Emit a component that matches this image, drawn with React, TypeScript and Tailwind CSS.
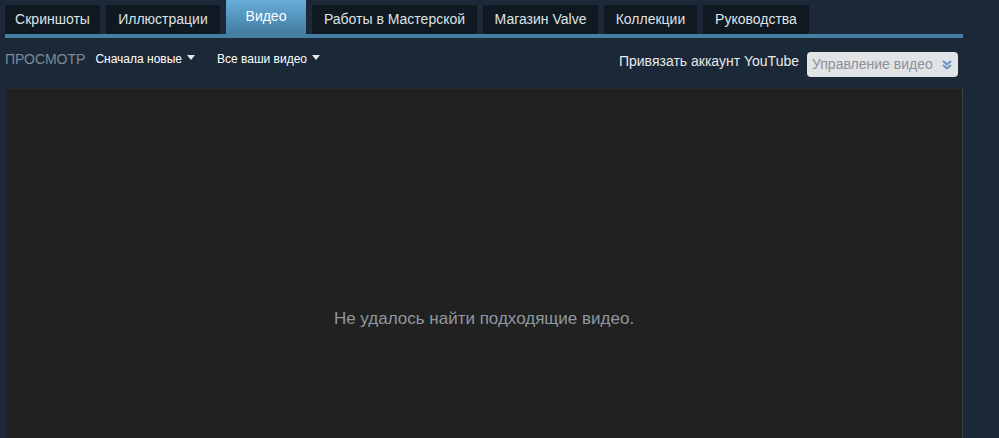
import React from "react";

const tabs = [
  { label: "Скриншоты", w: 95 },
  { label: "Иллюстрации", w: 114 },
  { label: "Видео", w: 80, active: true },
  { label: "Работы в Мастерской", w: 165 },
  { label: "Магазин Valve", w: 115 },
  { label: "Коллекции", w: 93 },
  { label: "Руководства", w: 106 },
];

function Caret() {
  return (
    <svg width="8" height="5" viewBox="0 0 8 5" className="ml-[5px] mt-[-3px]">
      <path d="M0 0 L8 0 L4 5 Z" fill="#e6e9ec" />
    </svg>
  );
}

export default function App() {
  return (
    <div
      className="w-[999px] h-[438px] overflow-hidden bg-[#1b2838]"
      style={{ fontFamily: '"Liberation Sans", Arial, sans-serif' }}
    >
      <div className="pl-[5px] w-[963px]">
        <div className="flex gap-[6px] h-[34px] items-end">
          {tabs.map((t) =>
            t.active ? (
              <div
                key={t.label}
                className="h-[34px] flex items-center justify-center pb-[1px] text-[14px] text-white bg-gradient-to-b from-[#67aedb] to-[#427da0]"
                style={{ width: t.w }}
              >
                {t.label}
              </div>
            ) : (
              <div
                key={t.label}
                className="h-[29px] flex items-center justify-center text-[14px] text-[#dfe3e6] bg-[#101822]"
                style={{ width: t.w }}
              >
                {t.label}
              </div>
            )
          )}
        </div>
        <div className="h-[4px] bg-[#447ea3]" />
      </div>

      <div className="flex justify-between pl-[5px] pr-[41px] h-[50px]">
        <div className="flex items-center self-start mt-[13px] h-[16px]">
          <span className="text-[14px] leading-[16px] text-[#7d8a98]">ПРОСМОТР</span>
          <span className="ml-[10px] text-[12px] text-white flex items-center">
            Сначала новые
            <Caret />
          </span>
          <span className="ml-[22px] text-[12px] text-white flex items-center">
            Все ваши видео
            <Caret />
          </span>
        </div>
        <div className="flex items-start mt-[14px]">
          <span className="text-[14px] leading-[16px] mt-[1px] text-[#e6e9ec]">Привязать аккаунт YouTube</span>
          <div className="ml-[8px] w-[151px] h-[25px] rounded-[4px] bg-[#e1e4e6] flex items-center justify-between pl-[5px] pr-[6px]">
            <span className="text-[14px] text-[#8c9196]">Управление видео</span>
            <svg width="10" height="10" viewBox="0 0 10 10">
              <path d="M1 1 L5 4.5 L9 1 M1 5 L5 8.5 L9 5" stroke="#6a8fc4" strokeWidth="2" fill="none" />
            </svg>
          </div>
        </div>
      </div>

      <div className="ml-[6px] w-[957px] h-[400px] bg-[#212121] border-t border-t-[#2a2b2c] border-r border-r-[#3a3d40] flex justify-center pt-[217px]">
        <span className="text-[17px] text-[#8f98a0]">Не удалось найти подходящие видео.</span>
      </div>
    </div>
  );
}
